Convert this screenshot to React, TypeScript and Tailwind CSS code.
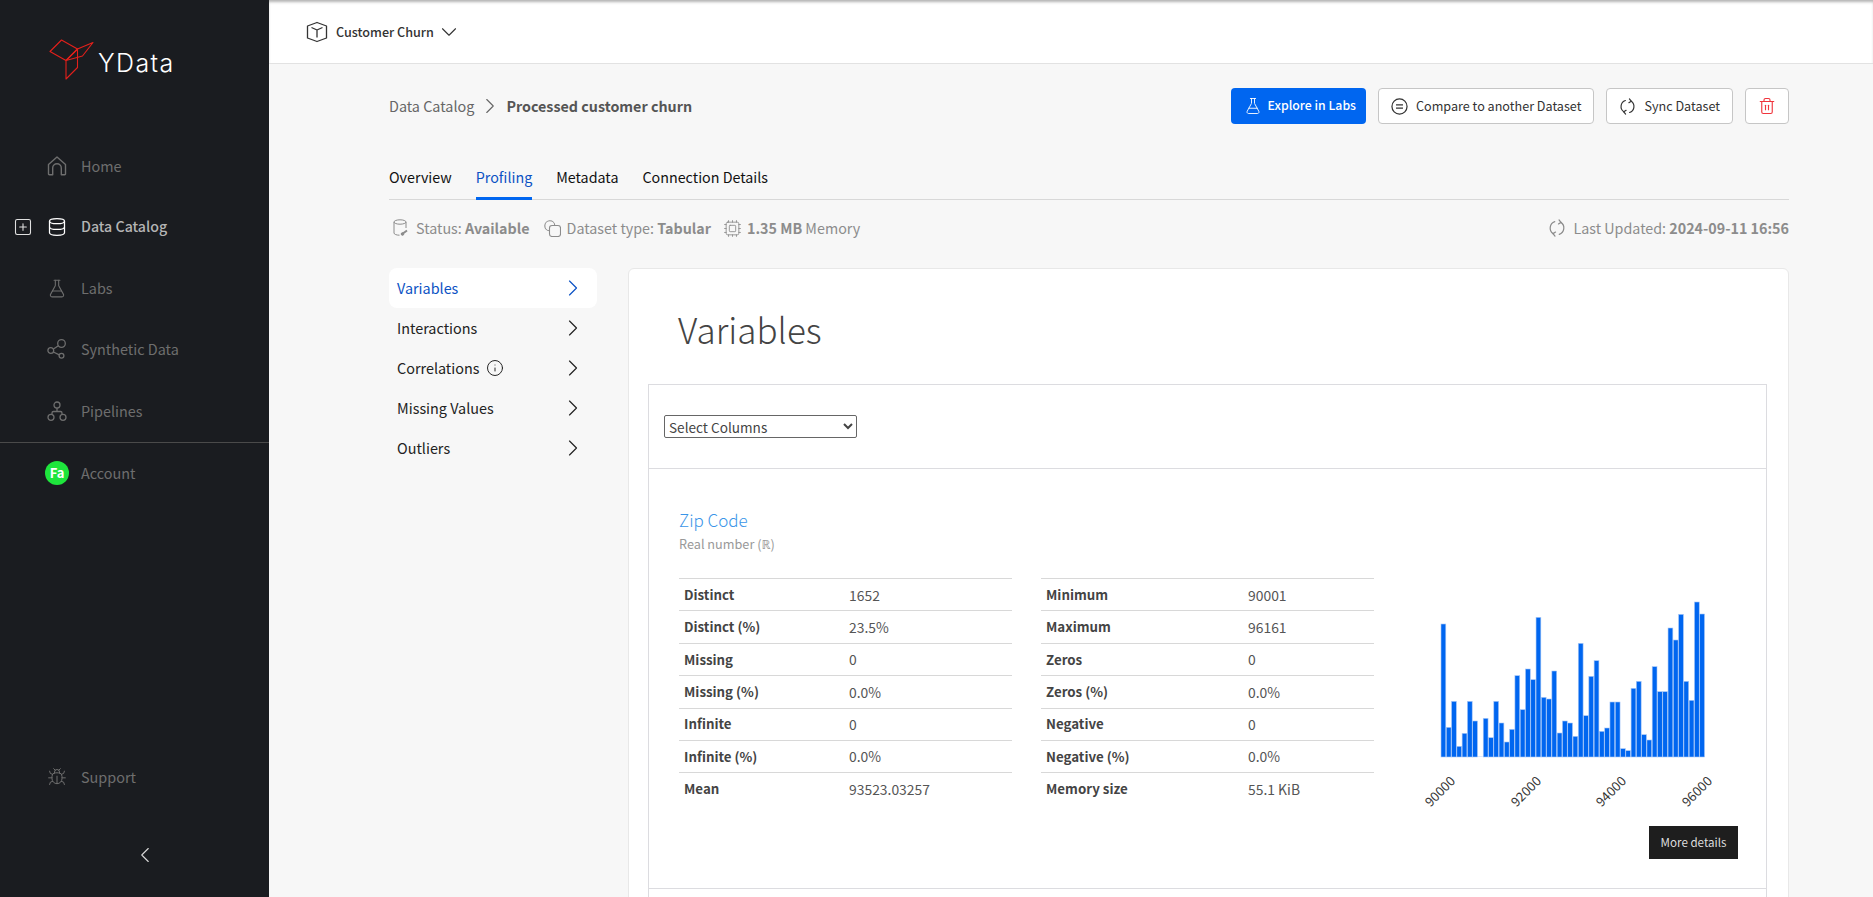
import React from "react";
import { Bug, ChevronDown, ChevronLeft, ChevronRight, Cpu, Database, FlaskConical, Info, SquarePlus, Trash2 } from "lucide-react";

const font = { fontFamily: '"Noto Sans CJK SC", "Noto Sans", sans-serif' };

const leftStats = [
  ["Distinct", "1652"],
  ["Distinct (%)", "23.5%"],
  ["Missing", "0"],
  ["Missing (%)", "0.0%"],
  ["Infinite", "0"],
  ["Infinite (%)", "0.0%"],
  ["Mean", "93523.03257"],
];

const rightStats = [
  ["Minimum", "90001"],
  ["Maximum", "96161"],
  ["Zeros", "0"],
  ["Zeros (%)", "0.0%"],
  ["Negative", "0"],
  ["Negative (%)", "0.0%"],
  ["Memory size", "55.1 KiB"],
];

// bar tops read off the reference, baseline is 532 (3x crop)
const barTops = [
  133, 443, 365, 500, 461, 365, 424, 532, 416, 474, 365, 430, 487, 449, 288, 390, 268, 300, 113, 353, 358, 274, 460,
  424, 430, 470, 191, 408, 290, 243, 455, 445, 367, 367, 507, 513, 326, 305, 465, 481, 261, 336, 336, 145, 181, 104,
  305, 362, 67, 103,
];

const HomeIcon = () => (
  <svg width="20" height="20" viewBox="0 0 20 20" fill="none" stroke="currentColor" strokeWidth="1.4">
    <path d="M1.5 8.5 10 1l8.5 7.5V18a.8.8 0 0 1-.8.8h-3.4V12a4.3 4.3 0 0 0-8.6 0v6.8H2.3a.8.8 0 0 1-.8-.8z" strokeLinejoin="round" />
  </svg>
);

const ShareIcon = () => (
  <svg width="20" height="20" viewBox="0 0 20 20" fill="none" stroke="currentColor" strokeWidth="1.3">
    <circle cx="14.5" cy="4.5" r="3.8" />
    <circle cx="3.8" cy="11.5" r="2.9" />
    <circle cx="14.5" cy="16.8" r="2.4" />
    <path d="m6.4 10 5-3.3M6.4 13l5.9 2.8" />
  </svg>
);

const PipelineIcon = () => (
  <svg width="20" height="20" viewBox="0 0 20 20" fill="none" stroke="currentColor" strokeWidth="1.3">
    <circle cx="10" cy="4" r="3" />
    <circle cx="4" cy="16.3" r="3" />
    <circle cx="16" cy="16.3" r="3" />
    <path d="M10 7v3.5M5 13.5V12q0-1.5 1.5-1.5h7q1.5 0 1.5 1.5v1.5" />
  </svg>
);

const CubeIcon = () => (
  <svg width="22" height="22" viewBox="0 0 22 22" fill="none" stroke="#333" strokeWidth="1.3" strokeLinejoin="round">
    <path d="M11 1.5 20.5 5v12L11 20.5 1.5 17V5z" />
    <path d="M5.5 6.5 11 9l5.500-2.500M11 9v7.500" />
  </svg>
);

const SyncIcon = ({ size = 17 }: { size?: number }) => (
  <svg width={size} height={size} viewBox="0 0 16 16" fill="none" stroke="currentColor" strokeWidth="1.1" strokeLinecap="round" strokeLinejoin="round">
    <path d="M6 2.4A6 6 0 0 0 4.5 13M10 13.6A6 6 0 0 0 11.5 3" />
    <path d="M9.8.8 11.5 3l-2.2 1.4M6.2 15.2 4.5 13l2.2-1.4" />
  </svg>
);

const EqualIcon = () => (
  <svg width="17" height="17" viewBox="0 0 18 18" fill="none" stroke="#333" strokeWidth="1.3">
    <circle cx="9" cy="9" r="8" />
    <path d="M5.3 7.3h7.4M5.3 10.700h7.400" />
  </svg>
);

const StatusIcon = () => (
  <svg width="16" height="18" viewBox="0 0 16 18" fill="none" stroke="currentColor" strokeWidth="1">
    <ellipse cx="7" cy="3" rx="6" ry="2.2" />
    <path d="M1 3v11c0 1.3 2.5 2.2 5.5 2.2M13 3v6" />
    <path d="m8.5 15.5 5.5-4" strokeWidth="2" />
    <circle cx="9.5" cy="15" r="1.3" fill="currentColor" />
  </svg>
);

const CopyIcon = () => (
  <svg width="17" height="17" viewBox="0 0 17 17" fill="none" stroke="currentColor" strokeWidth="1.1">
    <path d="M5.5 10.800a5 5 0 1 1 5.300-5.300" />
    <rect x="5.5" y="5.5" width="11" height="11" rx="2.5" />
  </svg>
);

const Logo = () => (
  <svg width="46" height="42" viewBox="0 0 46 42" fill="none" stroke="#e3201b" strokeWidth="1.1" strokeLinejoin="round">
    <path d="M12.5 1 1 12.5 17 21.5l11.500-11.500z" />
    <path d="M28.5 10 44 3.500 33.500 17 17 21.500z" />
    <path d="M17 21.5V40l11.500-11.500V10" />
  </svg>
);

const NavItem = ({ icon, label, active }: { icon: React.ReactNode; label: string; active?: boolean }) => (
  <div className={`relative flex h-[61.25px] items-center pl-[47px] ${active ? "text-[14.2px] font-medium text-[#b4b4b4]" : "text-[14.4px] text-[#6e6e6e]"}`}>
    {active && (
      <span className="absolute left-[13px] text-[#e0e0e0]">
        <SquarePlus size={20} strokeWidth={1.3} />
      </span>
    )}
    <span className={`flex w-[20px] justify-center ${active ? "text-white" : ""}`}>{icon}</span>
    <span className="ml-[14px]">{label}</span>
  </div>
);

const HeaderButton = ({ icon, label }: { icon: React.ReactNode; label: string }) => (
  <button className="flex h-[36px] items-center gap-[8px] rounded-[4px] border border-[#c6c6c6] bg-white pl-[12px] pr-[12px] text-[12.6px] text-[#333]">
    {icon}
    {label}
  </button>
);

const SideLink = ({ label, active, info }: { label: string; active?: boolean; info?: boolean }) => (
  <div className={`flex h-[40px] items-center justify-between rounded-[8px] pl-[8px] pr-[10px] text-[14.4px] ${active ? "bg-white text-[#0b52c4]" : "text-[#222]"}`}>
    <span className="flex items-center gap-[7px]">
      {label}
      {info && <Info size={18} strokeWidth={1.3} />}
    </span>
    <ChevronRight size={28} strokeWidth={1} className={active ? "text-[#0b52c4]" : "text-[#222]"} />
  </div>
);

const StatTable = ({ rows, labelWidth }: { rows: string[][]; labelWidth: string }) => (
  <div className="w-[333px] text-[13.9px] text-[#555]">
    {rows.map(([label, value]) => (
      <div key={label} className="flex h-[32.4px] items-center border-t border-[#d8d8d8] pl-[5px] pt-px">
        <span className={`${labelWidth} text-[13.3px] font-bold text-[#444]`}>{label}</span>
        <span>{value}</span>
      </div>
    ))}
  </div>
);

const Histogram = () => (
  <svg width="310" height="225" viewBox="0 0 310 225">
    {barTops.map((top, i) => {
      const h = (532 - top) / 3;
      return h > 0 ? (
        <rect key={i} x={20 + i * 5.28} y={163 - h} width={4.8} height={h} fill="#0066f0" stroke="#a9c8f7" strokeWidth="0.6" />
      ) : (
        <rect key={i} x={20 + i * 5.28} y={162.6} width={4.8} height={0.4} fill="#a9c8f7" />
      );
    })}
    {[
      ["90000", 35],
      ["92000", 121],
      ["94000", 206],
      ["96000", 292],
    ].map(([t, x]) => (
      <text key={t} x={0} y={0} textAnchor="end" fontSize="13" fill="#333" transform={`translate(${x} 188) rotate(-45)`} style={font}>
        {t}
      </text>
    ))}
  </svg>
);

export default function App() {
  return (
    <div className="flex h-screen w-full overflow-hidden bg-[#f7f7f7] leading-[1.25]" style={font}>
      {/* Sidebar */}
      <aside className="flex w-[269px] shrink-0 flex-col bg-[#1a1c20]">
        <div className="flex h-[135px] items-start pl-[49px] pt-[39px]">
          <Logo />
          <span className="ml-[3px] mt-[9px] text-[25px] font-light leading-[30px] tracking-[1.4px] text-white" style={{ fontFamily: "Inter, sans-serif" }}>
            YData
          </span>
        </div>
        <NavItem icon={<HomeIcon />} label="Home" />
        <NavItem active icon={<Database size={22} strokeWidth={1.5} />} label="Data Catalog" />
        <NavItem icon={<FlaskConical size={21} strokeWidth={1.3} />} label="Labs" />
        <NavItem icon={<ShareIcon />} label="Synthetic Data" />
        <NavItem icon={<PipelineIcon />} label="Pipelines" />
        <div className="mt-[1px] border-t border-[#4a4a4a]" />
        <div className="flex h-[60px] items-center pl-[45px] text-[14.4px] text-[#6e6e6e]">
          <span className="flex h-[24px] w-[24px] items-center justify-center rounded-full bg-[#1ee53c] text-[13px] font-bold text-white">Fa</span>
          <span className="ml-[12px]">Account</span>
        </div>
        <div className="mt-auto">
          <NavItem icon={<Bug size={22} strokeWidth={1.2} />} label="Support" />
          <div className="flex h-[89px] pl-[132px] pt-[34px] text-[#d8d8d8]">
            <ChevronLeft size={26} strokeWidth={1} />
          </div>
        </div>
      </aside>

      <main className="flex min-w-0 flex-1 flex-col">
        {/* Top bar */}
        <div className="flex h-[64px] shrink-0 items-center border-b border-[#e2e2e2] bg-white pl-[37px] text-[12.6px] font-medium text-[#333] shadow-[inset_0_3px_3px_-1px_rgba(0,0,0,0.3)]">
          <CubeIcon />
          <span className="ml-[8px]">Customer Churn</span>
          <ChevronDown size={26} strokeWidth={1} className="ml-[2px]" />
        </div>

        <div className="flex flex-1 flex-col pl-[120px] pr-[84px]">
          {/* Breadcrumb and actions */}
          <div className="mt-[24px] flex h-[36px] shrink-0 items-center justify-between">
            <div className="flex items-center text-[14.4px] text-[#666]">
              Data Catalog
              <ChevronRight size={26} strokeWidth={1} className="mx-[3px]" />
              <span className="text-[14.3px] font-bold text-[#555]">Processed customer churn</span>
            </div>
            <div className="flex items-center gap-[12px]">
              <button className="flex h-[36px] items-center gap-[6px] rounded-[4px] bg-[#0066f0] pl-[13px] pr-[10px] text-[12.3px] font-medium text-white">
                <FlaskConical size={18} strokeWidth={1.2} />
                Explore in Labs
              </button>
              <HeaderButton icon={<EqualIcon />} label="Compare to another Dataset" />
              <HeaderButton icon={<SyncIcon />} label="Sync Dataset" />
              <button className="flex h-[36px] w-[44px] items-center justify-center rounded-[4px] border border-[#c6c6c6] bg-white text-[#f0343c]">
                <Trash2 size={18} strokeWidth={1.5} />
              </button>
            </div>
          </div>

          {/* Tabs */}
          <div className="mt-[36px] flex h-[40px] shrink-0 gap-[24px] border-b border-[#d8d8d8] text-[14.3px] text-[#111]">
            <span className="flex items-center pb-[6px]">Overview</span>
            <span className="-mb-px flex items-center border-b-[3px] border-[#0066f0] pb-[3px] text-[#0b52c4]">Profiling</span>
            <span className="flex items-center pb-[6px]">Metadata</span>
            <span className="flex items-center pb-[6px]">Connection Details</span>
          </div>

          {/* Status row */}
          <div className="flex h-[56px] shrink-0 items-center justify-between pl-[4px] text-[14.3px] text-[#8c8c8c]">
            <div className="flex items-center">
              <StatusIcon />
              <span className="ml-[7px]">
                Status: <b>Available</b>
              </span>
              <span className="ml-[14px]">
                <CopyIcon />
              </span>
              <span className="ml-[6px]">
                Dataset type: <b>Tabular</b>
              </span>
              <Cpu size={19} strokeWidth={1.1} className="ml-[12px]" />
              <span className="ml-[5px]">
                <b>1.35 MB</b> Memory
              </span>
            </div>
            <div className="flex items-center gap-[8px]">
              <SyncIcon size={18} />
              <span>
                Last Updated: <b>2024-09-11 16:56</b>
              </span>
            </div>
          </div>

          <div className="mt-[12px] flex flex-1 gap-[31px]">
            {/* Profile menu */}
            <div className="w-[208px] shrink-0">
              <SideLink active label="Variables" />
              <SideLink label="Interactions" />
              <SideLink info label="Correlations" />
              <SideLink label="Missing Values" />
              <SideLink label="Outliers" />
            </div>

            {/* Report card */}
            <section className="flex-1 rounded-t-[6px] border border-[#e8e8e8] bg-white pl-[19px] pr-[21px]">
              <h1 className="pl-[30px] pt-[36px] text-[35px] font-light leading-[48px] text-[#444]">Variables</h1>
              <div className="mt-[31px] border-x border-t border-[#dcdce0]">
                <div className="flex h-[84px] items-center border-b border-[#dcdce0] pl-[15px]">
                  <select className="h-[23px] w-[193px] rounded-[2px] border border-[#666] bg-white pb-[1px] text-[13.6px] text-[#444]">
                    <option>Select Columns</option>
                  </select>
                </div>
                <div className="relative h-[420px] border-b border-[#dcdce0] pl-[30px]">
                  <h2 className="pt-[38px] text-[17px] font-light leading-[26px] text-[#3a95e8]">Zip Code</h2>
                  <p className="mt-[1px] text-[12.7px] leading-[20px] text-[#999]">Real number (ℝ)</p>
                  <div className="mt-[24px] flex items-start gap-[29px]">
                    <StatTable rows={leftStats} labelWidth="w-[165px]" />
                    <StatTable rows={rightStats} labelWidth="w-[202px]" />
                    <div className="ml-[18px] mt-[16px]">
                      <Histogram />
                    </div>
                  </div>
                  <button className="absolute bottom-[29px] right-[28px] flex h-[33px] w-[89px] items-center justify-center bg-[#1e1e1e] text-[11.6px] text-[#ddd]">More details</button>
                </div>
                <div className="h-[40px]" />
              </div>
            </section>
          </div>
        </div>
      </main>
    </div>
  );
}
